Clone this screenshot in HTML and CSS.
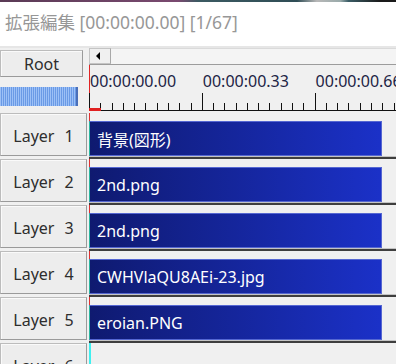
FILE: index.html
```html
<!DOCTYPE html>
<html lang="ja">
<head>
  <meta charset="UTF-8" />
  <title>拡張編集</title>
  <link rel="stylesheet" href="styles.css">
</head>
<body>
  <div class="photo-strip"></div>
  <div class="titlebar">拡張編集 [00:00:00.00] [1/67]</div>

  <div class="editor">
    <div class="head">
      <div class="head-left">
        <div class="btn root-btn">Root</div>
        <div class="zoom-bar"></div>
      </div>
      <div class="head-right">
        <div class="hscroll">
          <div class="arrow-btn">
            <svg width="5" height="8" viewBox="0 0 5 8"><path d="M4 0 L0 4 L4 8 Z" fill="#000"/></svg>
          </div>
          <div class="hscroll-track"></div>
        </div>
        <div class="ruler">
          <div class="labels">
            <span>00:00:00.00</span>
            <span>00:00:00.33</span>
            <span>00:00:00.66</span>
          </div>
          <div class="ticks"><div class="frame-mark"></div></div>
        </div>
      </div>
    </div>

    <div class="layer">
      <div class="layer-side"><div class="btn layer-btn">Layer 1</div></div>
      <div class="layer-track"><div class="gap"></div><div class="clip">背景(図形)</div></div>
    </div>
    <div class="layer">
      <div class="layer-side"><div class="btn layer-btn">Layer 2</div></div>
      <div class="layer-track"><div class="gap"></div><div class="clip">2nd.png</div></div>
    </div>
    <div class="layer">
      <div class="layer-side"><div class="btn layer-btn">Layer 3</div></div>
      <div class="layer-track"><div class="gap"></div><div class="clip">2nd.png</div></div>
    </div>
    <div class="layer">
      <div class="layer-side"><div class="btn layer-btn">Layer 4</div></div>
      <div class="layer-track"><div class="gap"></div><div class="clip">CWHVlaQU8AEi-23.jpg</div></div>
    </div>
    <div class="layer">
      <div class="layer-side"><div class="btn layer-btn">Layer 5</div></div>
      <div class="layer-track"><div class="gap"></div><div class="clip">eroian.PNG</div></div>
    </div>
    <div class="layer">
      <div class="layer-side"><div class="btn layer-btn">Layer 6</div></div>
      <div class="layer-track empty"></div>
    </div>
  </div>
</body>
</html>
```

FILE: styles.css
```css
* {
  box-sizing: border-box;
  margin: 0;
  padding: 0;
}

html, body {
  width: 396px;
  height: 364px;
  overflow: hidden;
}

body {
  background: #f0f0f0;
  font-family: 'Noto Sans', 'Noto Sans CJK JP', sans-serif;
}

.photo-strip {
  height: 2px;
  background: linear-gradient(90deg, #5a3a55 0, #7a4a70 45%, #3c5a62 50%, #2f4d55 75%, #b8b8b8 80%, #9aa 86%, #3b5d66 88%, #1a1a1a 96%);
}

.titlebar {
  height: 46px;
  padding: 8px 0 0 5px;
  background: #fff;
  border-bottom: 2px solid #e6e6e6;
  color: #979797;
  font-size: 17.5px;
  line-height: 24px;
}

.editor {
  display: flex;
  flex-direction: column;
}

.head {
  display: flex;
  height: 65px;
}

.head-left {
  width: 89px;
  flex: none;
}

.btn {
  background: #ededed;
  border: 1px solid #bcbcbc;
  border-right-color: #9a9a9a;
  border-bottom-color: #9a9a9a;
  box-shadow: inset 1px 1px 0 #fafafa;
  color: #2e2e2e;
  display: flex;
  align-items: center;
  justify-content: center;
}

.root-btn {
  width: 83px;
  height: 27px;
  margin-top: 2px;
  font-size: 16px;
}

.zoom-bar {
  width: 78px;
  height: 19px;
  margin-top: 10px;
  background: repeating-linear-gradient(90deg, #9cc0f6 0 1px, #6a9ae6 1px 2px);
  border-right: 2px solid #4a6fb8;
}

.head-right {
  flex: 1;
  display: flex;
  flex-direction: column;
}

.hscroll {
  display: flex;
  height: 17px;
  border-bottom: 1px solid #9c9c9c;
}

.arrow-btn {
  width: 22px;
  background: #f0f0f0;
  border: 1px solid #c4c4c4;
  border-right-color: #a8a8a8;
  display: flex;
  align-items: center;
  justify-content: center;
  padding-right: 3px;
}

.hscroll-track {
  flex: 1;
  background: #f4f4f4;
  border-top: 1px solid #dadada;
}

.ruler {
  height: 48px;
  padding-top: 6px;
  background: linear-gradient(#e02424 0 28px, #36dede 28px 41px, transparent 41px) no-repeat 0 0 / 1px 100%;
}

.labels {
  display: flex;
  height: 20px;
  padding-left: 1px;
  font-size: 16px;
  line-height: 20px;
  color: #1d2445;
  white-space: nowrap;
}

.labels span {
  flex: none;
  width: 112.8px;
}

.ticks {
  display: flex;
  align-items: flex-end;
  height: 18px;
  margin-top: 2px;
  background:
    linear-gradient(#111, #111) no-repeat left bottom / 100% 1px,
    repeating-linear-gradient(90deg, #111 0 1px, transparent 1px 11.28px) no-repeat left bottom / 100% 8px,
    repeating-linear-gradient(90deg, #111 0 1px, transparent 1px 112.8px) no-repeat left bottom / 100% 18px;
}

.frame-mark {
  width: 12px;
  height: 3px;
  background: #e02020;
}

.layer {
  display: flex;
  height: 46px;
}

.layer-side {
  width: 89px;
  flex: none;
}

.layer-btn {
  width: 87px;
  height: 43px;
  padding-top: 2px;
  font-size: 16px;
  word-spacing: 6px;
}

.layer-track {
  flex: 1;
  display: flex;
  flex-direction: column;
  border-bottom: 2px solid #3e3e3e;
  box-shadow: inset 0 -1px 0 #c4c4c4;
}

.gap {
  height: 8px;
  border-left: 1px solid #e03030;
}

.clip {
  height: 35px;
  margin-right: 14px;
  padding-left: 7px;
  display: flex;
  align-items: center;
  background: linear-gradient(90deg, #0f1a70, #1b31c8);
  border: 1px solid #5567d2;
  border-left: 1px solid #2bb8a0;
  color: #fff;
  font-size: 16px;
  white-space: nowrap;
}

.layer-track.empty {
  border-bottom: none;
  box-shadow: none;
  border-left: 2px solid #3ef0f0;
}
```
